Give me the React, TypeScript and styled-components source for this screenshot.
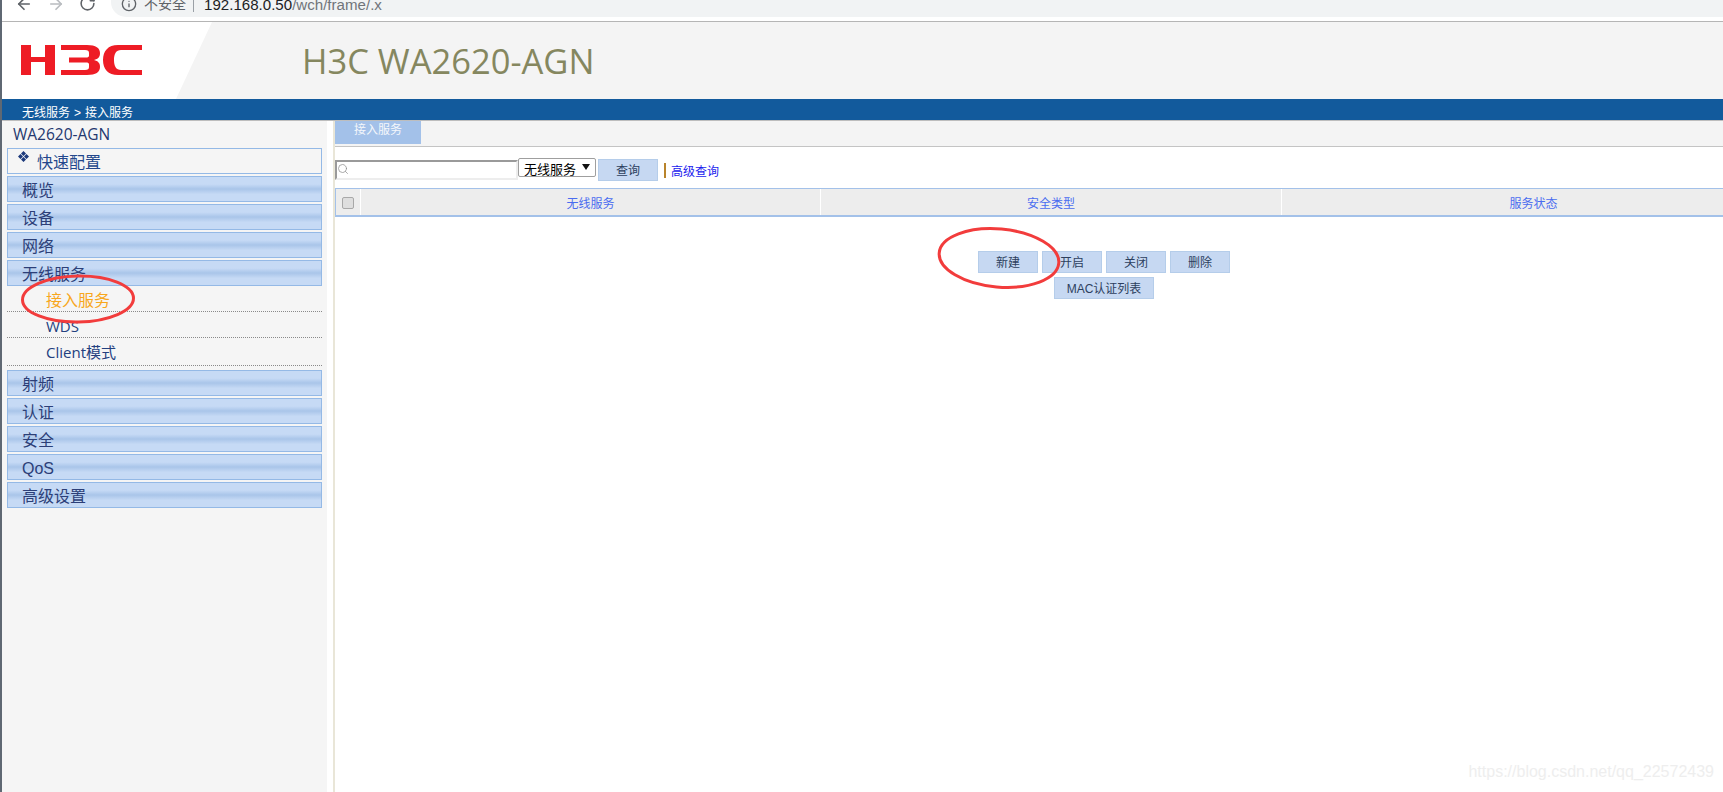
import React from "react";
import styled, { createGlobalStyle } from "styled-components";
import { ArrowLeft, ArrowRight, RotateCw, Info, Search } from "lucide-react";

const cjk = `"Noto Sans CJK SC", sans-serif`;

const GlobalStyle = createGlobalStyle`
  html, body {
    margin: 0;
    padding: 0;
    height: 100%;
    background: #fff;
    overflow: hidden;
  }
  * {
    box-sizing: border-box;
  }
`;

const Page = styled.div`
  position: relative;
  width: 1723px;
  height: 792px;
  display: flex;
  flex-direction: column;
  overflow: hidden;
  border-left: 2px solid #5f6873;
  font-family: "Liberation Sans", ${cjk};
`;

/* browser chrome, its upper part is cut off by the screenshot */
const BrowserBar = styled.div`
  height: 22px;
  flex: none;
  background: #fff;
  border-bottom: 1px solid #b5b5b5;
  overflow: hidden;
`;
const BrowserRow = styled.div`
  height: 30px;
  margin-top: -13px;
  display: flex;
  align-items: center;
  padding-left: 13px;
`;
const NavIcon = styled.span<{ $faded?: boolean }>`
  width: 18px;
  height: 18px;
  margin-right: 14px;
  margin-top: 4px;
  display: flex;
  color: ${(p) => (p.$faded ? "#b9bcc0" : "#5f6368")};
`;
const AddressPill = styled.div`
  flex: 1;
  height: 30px;
  padding: 4px 0 0 10px;
  display: flex;
  align-items: center;
  background: #f1f3f4;
  border-radius: 15px 0 0 15px;
  font-size: 15.1px;
`;
const InfoIcon = styled.span`
  width: 16px;
  height: 16px;
  display: flex;
  color: #5f6368;
  margin-right: 7px;
`;
const Insecure = styled.span`
  font-size: 14px;
  color: #5f6368;
  padding-right: 7px;
  border-right: 1px solid #9aa0a6;
  line-height: 16px;
  margin-right: 10px;
`;
const Host = styled.span`
  color: #202124;
`;
const UrlPath = styled.span`
  color: #70757a;
`;

const Header = styled.div`
  position: relative;
  height: 77px;
  flex: none;
  background: #f4f4f4;
  display: flex;
  align-items: center;
`;
const LogoPlate = styled.div`
  width: 210px;
  height: 77px;
  flex: none;
  background: #fff;
  clip-path: polygon(0 0, 100% 0, 174px 100%, 0 100%);
  padding: 23px 0 0 19px;
`;
const ProductTitle = styled.h1`
  margin: 0 0 0 90px;
  font-family: "Open Sans", sans-serif;
  font-size: 34.5px;
  font-weight: 400;
  color: #85875f;
  white-space: nowrap;
`;
const Breadcrumb = styled.div`
  height: 22px;
  flex: none;
  background: #125a9c;
  border-bottom: 1px solid #bdbdbd;
  color: #fff;
  font-size: 12px;
  line-height: 12px;
  padding: 8px 0 0 20px;
  display: flex;
  gap: 4px;
`;

const Body = styled.div`
  flex: 1;
  display: flex;
  min-height: 0;
`;
const Sidebar = styled.div`
  width: 333px;
  flex: none;
  background: linear-gradient(to right, #f5f5f5 325px, #fff 325px);
  border-right: 2px solid #e9e6d8;
  padding-left: 5px;
`;
const NavList = styled.div`
  width: 315px;
  display: flex;
  flex-direction: column;
  gap: 2px;
`;
const DeviceName = styled.div`
  height: 25px;
  padding-left: 6px;
  font-family: "Open Sans", sans-serif;
  font-size: 15.5px;
  line-height: 27px;
  color: #24386f;
`;
const QuickItem = styled.div`
  position: relative;
  height: 26px;
  border: 1px solid #94b9e6;
  background: #f5f5f5;
  padding-left: 29px;
  font-size: 16px;
  line-height: 28px;
  color: #23478c;
`;
const Diamond = styled.svg`
  position: absolute;
  left: 10px;
  top: 2px;
  width: 11px;
  height: 11px;
`;
const MenuItem = styled.div`
  height: 26px;
  border: 1px solid #94b9e6;
  background: linear-gradient(to bottom, #c6daf5 0%, #c6daf5 30%, #a9c5e9 50%, #c6daf5 72%, #c6daf5 100%);
  padding-left: 14px;
  font-size: 16px;
  line-height: 27px;
  color: #2c3f78;
`;
const SubList = styled.div`
  margin: -2px 0 2px;
  display: flex;
  flex-direction: column;
`;
const SubItem = styled.div<{ $active?: boolean; $tall?: boolean }>`
  height: ${(p) => (p.$tall ? "28px" : "26px")};
  border-bottom: 1px dotted #8a8a8a;
  padding-left: 39px;
  font-family: "Open Sans", ${cjk};
  font-size: ${(p) => (p.$active ? "16px" : "15px")};
  line-height: 28px;
  color: ${(p) => (p.$active ? "#f8a71c" : "#23407f")};
`;

const Main = styled.div`
  flex: 1;
  min-width: 0;
  display: flex;
  flex-direction: column;
`;
const TabBar = styled.div`
  height: 26px;
  flex: none;
  background: #f4f4f4;
  border-bottom: 1px solid #c4c4c4;
`;
const Tab = styled.div`
  width: 86px;
  height: 23px;
  background: #a3c1e9;
  color: #f4f7fb;
  font-size: 12px;
  line-height: 19px;
  text-align: center;
`;
const Toolbar = styled.div`
  height: 41px;
  flex: none;
  padding-top: 5px;
  display: flex;
  align-items: center;
`;
const SearchBox = styled.div`
  position: relative;
  width: 183px;
  height: 20px;
  border: 2px solid;
  border-color: #9a9a9a #ededed #ededed #9a9a9a;
  background: #fff;
`;
const SearchGlyph = styled.span`
  position: absolute;
  left: 0;
  top: 1px;
  display: flex;
  color: #8f8f8f;
`;
const SelectWrap = styled.div`
  position: relative;
  width: 78px;
  height: 19px;
  margin: 0 2px 5px 0;
  &::after {
    content: "";
    position: absolute;
    right: 6px;
    top: 6px;
    border-left: 4px solid transparent;
    border-right: 4px solid transparent;
    border-top: 6px solid #111;
  }
`;
const ServiceSelect = styled.select`
  appearance: none;
  width: 100%;
  height: 100%;
  border: 1px solid #9f9f9f;
  border-radius: 2px;
  background: #fff;
  padding: 0 0 0 5px;
  font-family: ${cjk};
  font-size: 13px;
  color: #000;
`;
const QueryButton = styled.button`
  width: 60px;
  height: 22px;
  border: 1px solid #b5cdea;
  background: #c6d8f2;
  padding: 0 0 2px;
  font-family: ${cjk};
  font-size: 12px;
  color: #2d3f5e;
`;
const Divider = styled.span`
  width: 2px;
  height: 15px;
  margin: 0 5px 0 6px;
  background: #b9842b;
`;
const AdvancedLink = styled.a`
  font-size: 12px;
  color: #1a1aee;
`;
const TableHead = styled.div`
  width: 1450px;
  height: 29px;
  flex: none;
  display: grid;
  grid-template-columns: 25px 460px 461px 504px;
  background: #ededed;
  border-top: 1px solid #a3c1e9;
  border-left: 1px solid #a3c1e9;
  border-bottom: 2px solid #a3c1e9;
`;
const HeadCell = styled.div`
  display: flex;
  align-items: center;
  justify-content: center;
  padding-top: 1px;
  border-right: 1px solid #fff;
  font-size: 12px;
  color: #4a6cf0;
`;
const CheckBox = styled.span`
  width: 12px;
  height: 12px;
  border: 1px solid #a8a8a8;
  border-radius: 2px;
  background: #dedede;
`;
const Actions = styled.div`
  margin-top: 34px;
  padding-left: 150px;
  display: flex;
  flex-direction: column;
  align-items: center;
  gap: 4px;
`;
const ActionRow = styled.div`
  display: flex;
  gap: 4px;
`;
const ActionButton = styled.button<{ $wide?: boolean }>`
  width: ${(p) => (p.$wide ? "100px" : "60px")};
  height: 22px;
  border: 1px solid #b5cdea;
  background: #c6d8f2;
  padding: 0 0 2px;
  font-family: "Liberation Sans", ${cjk};
  font-size: 12px;
  color: #2d3f5e;
`;

/* hand drawn red marks lying over the page */
const RedMark = styled.svg<{ $left: number; $top: number }>`
  position: absolute;
  left: ${(p) => p.$left}px;
  top: ${(p) => p.$top}px;
  overflow: visible;
  pointer-events: none;
`;
const Watermark = styled.div`
  position: absolute;
  right: 9px;
  bottom: 11px;
  font-size: 16px;
  color: #eeeeee;
`;

const H3CLogo = () => (
  <svg width="122" height="30" viewBox="0 0 122 30" fill="#ee1c25">
    <path d="M0 0H10V12H24V0H34V30H24V17H10V30H0Z" />
    <path d="M40 0H66C75 0 79 3 79 8C79 12 77 14 73 15C77 16 79 18 79 22C79 27 75 30 66 30H40V25H64C67 25 68 24 68 22V19.5C68 18 67 17.5 65 17.5H48V12.5H65C67 12.5 68 12 68 10.5V8C68 6 67 5 64 5H40Z" />
    <path d="M121 0H97C87 0 82 6 82 15C82 24 87 30 97 30H121V25H100C95 25 93 21 93 15C93 9 95 5 100 5H121Z" />
  </svg>
);

const menuTop = ["概览", "设备", "网络", "无线服务"];
const menuBottom = ["射频", "认证", "安全", "QoS", "高级设置"];

const App = () => {
  return (
    <Page>
      <GlobalStyle />
      <BrowserBar>
        <BrowserRow>
          <NavIcon><ArrowLeft size={18} strokeWidth={2.2} /></NavIcon>
          <NavIcon $faded><ArrowRight size={18} strokeWidth={2.2} /></NavIcon>
          <NavIcon><RotateCw size={17} strokeWidth={2.2} /></NavIcon>
          <AddressPill>
            <InfoIcon><Info size={16} strokeWidth={2} /></InfoIcon>
            <Insecure>不安全</Insecure>
            <Host>192.168.0.50</Host>
            <UrlPath>/wch/frame/.x</UrlPath>
          </AddressPill>
        </BrowserRow>
      </BrowserBar>
      <Header>
        <LogoPlate><H3CLogo /></LogoPlate>
        <ProductTitle>H3C WA2620-AGN</ProductTitle>
      </Header>
      <Breadcrumb>
        <span>无线服务</span>
        <span>&gt;</span>
        <span>接入服务</span>
      </Breadcrumb>
      <Body>
        <Sidebar>
          <NavList>
            <DeviceName>WA2620-AGN</DeviceName>
            <QuickItem>
              <Diamond viewBox="0 0 11 11" fill="#1d3a7c">
                <path d="M5.5 0L8 2.5L5.5 5L3 2.5ZM2.5 3L5 5.5L2.5 8L0 5.5ZM8.5 3L11 5.5L8.5 8L6 5.5ZM5.5 6L8 8.5L5.5 11L3 8.5Z" />
              </Diamond>
              快速配置
            </QuickItem>
            {menuTop.map((m) => <MenuItem key={m}>{m}</MenuItem>)}
            <SubList>
              <SubItem $active>接入服务</SubItem>
              <SubItem>WDS</SubItem>
              <SubItem $tall>Client模式</SubItem>
            </SubList>
            {menuBottom.map((m) => <MenuItem key={m}>{m}</MenuItem>)}
          </NavList>
        </Sidebar>
        <Main>
          <TabBar><Tab>接入服务</Tab></TabBar>
          <Toolbar>
            <SearchBox>
              <SearchGlyph><Search size={12} strokeWidth={1.5} /></SearchGlyph>
            </SearchBox>
            <SelectWrap>
              <ServiceSelect defaultValue="无线服务">
                <option>无线服务</option>
              </ServiceSelect>
            </SelectWrap>
            <QueryButton>查询</QueryButton>
            <Divider />
            <AdvancedLink>高级查询</AdvancedLink>
          </Toolbar>
          <TableHead>
            <HeadCell><CheckBox /></HeadCell>
            <HeadCell>无线服务</HeadCell>
            <HeadCell>安全类型</HeadCell>
            <HeadCell>服务状态</HeadCell>
          </TableHead>
          <Actions>
            <ActionRow>
              <ActionButton>新建</ActionButton>
              <ActionButton>开启</ActionButton>
              <ActionButton>关闭</ActionButton>
              <ActionButton>删除</ActionButton>
            </ActionRow>
            <ActionButton $wide>MAC认证列表</ActionButton>
          </Actions>
        </Main>
      </Body>
      <RedMark $left={18} $top={273} width="116" height="50" viewBox="0 0 116 50" fill="none" stroke="#f23c3c" strokeWidth="3">
        <ellipse cx="58" cy="26" rx="55.5" ry="23" transform="rotate(-1 58 26)" />
      </RedMark>
      <RedMark $left={935} $top={225} width="122" height="64" viewBox="0 0 122 64" fill="none" stroke="#f23c3c" strokeWidth="3">
        <ellipse cx="62" cy="33" rx="60" ry="29" transform="rotate(5 62 33)" />
      </RedMark>
      <Watermark>https://blog.csdn.net/qq_22572439</Watermark>
    </Page>
  );
};

export default App;
